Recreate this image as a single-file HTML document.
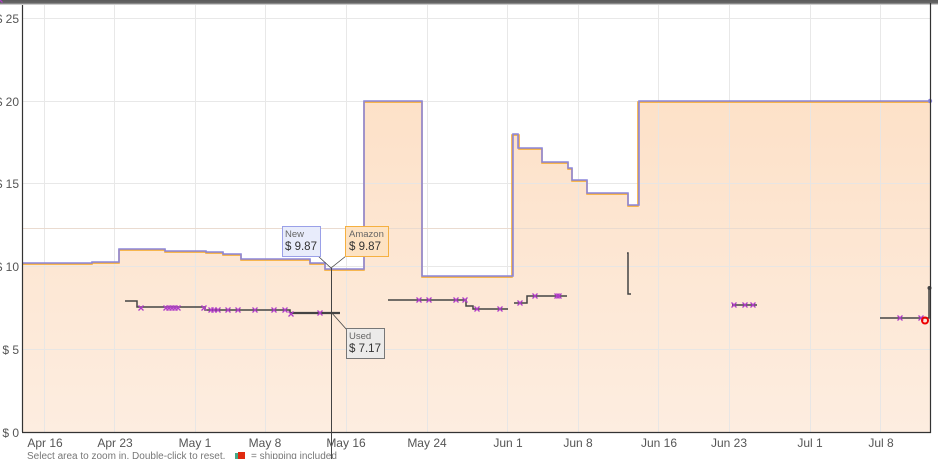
<!DOCTYPE html>
<html><head><meta charset="utf-8"><style>
html,body{margin:0;padding:0;background:#fff;width:938px;height:459px;overflow:hidden;font-family:"Liberation Sans",sans-serif}
svg{display:block}
</style></head><body>
<svg width="938" height="459" viewBox="0 0 938 459" xmlns="http://www.w3.org/2000/svg">
<defs>
<linearGradient id="g" x1="0" y1="0" x2="0" y2="1">
<stop offset="0" stop-color="#fde1c8"/><stop offset="1" stop-color="#fdede0"/>
</linearGradient>
<linearGradient id="tb" x1="0" y1="0" x2="0" y2="1">
<stop offset="0" stop-color="#5a5a5a"/><stop offset="0.6" stop-color="#666"/><stop offset="1" stop-color="#eee"/>
</linearGradient>
</defs>
<rect x="0" y="0" width="938" height="5" fill="url(#tb)"/>
<path d="M22,263 H92 V262 H119 V249 H165 V251 H206 V252 H223 V254 H241 V259 H310 V263 H325 V269 H364 V101 H422 V276 H513 V134 H518 V148 H542 V162 H568 V168 H572 V180 H587 V193 H628 V205 H639 V101 H930 V432 H22 Z" fill="url(#g)"/>
<g stroke="#e6e6e6" stroke-width="1" opacity="0.9">
<line x1="22" y1="18.5" x2="930" y2="18.5"/><line x1="22" y1="101.5" x2="930" y2="101.5"/><line x1="22" y1="183.5" x2="930" y2="183.5"/><line x1="22" y1="266.5" x2="930" y2="266.5"/><line x1="22" y1="349.5" x2="930" y2="349.5"/>
<line x1="44.5" y1="5" x2="44.5" y2="432"/><line x1="114.5" y1="5" x2="114.5" y2="432"/><line x1="195.5" y1="5" x2="195.5" y2="432"/><line x1="265.5" y1="5" x2="265.5" y2="432"/><line x1="346.5" y1="5" x2="346.5" y2="432"/><line x1="427.5" y1="5" x2="427.5" y2="432"/><line x1="507.5" y1="5" x2="507.5" y2="432"/><line x1="578.5" y1="5" x2="578.5" y2="432"/><line x1="658.5" y1="5" x2="658.5" y2="432"/><line x1="729.5" y1="5" x2="729.5" y2="432"/><line x1="810.5" y1="5" x2="810.5" y2="432"/><line x1="880.5" y1="5" x2="880.5" y2="432"/>
</g>
<line x1="22" y1="228.5" x2="930" y2="228.5" stroke="#eadbd0"/>
<path d="M22,264 H92 V263 H119 V250 H165 V252 H206 V253 H223 V255 H241 V260 H310 V264 H325 V270 H364 V102 H422 V277 H512 V135 H519 V149 H542 V163 H568 V169 H572 V181 H587 V194 H628 V206 H638 V102 H930" fill="none" stroke="#f5a623" stroke-width="1.5"/>
<path d="M22,263 H92 V262 H119 V249 H165 V251 H206 V252 H223 V254 H241 V259 H310 V263 H325 V269 H364 V101 H422 V276 H513 V134 H518 V148 H542 V162 H568 V168 H572 V180 H587 V193 H628 V205 H639 V101 H930" fill="none" stroke="#8b86dc" stroke-width="1.6"/>
<circle cx="930" cy="101" r="2.2" fill="#8b86dc"/>
<g fill="none" stroke="#444" stroke-width="1.5">
<path d="M125,301 H137 V307 H205 V310 H290 V312"/>
<path d="M290,313 H340" stroke-width="2.2"/>
<path d="M388,300 H466 V306 H473 V309 H508"/>
<path d="M514,303 H527 V296 H567"/>
<path d="M627,253 H628 V294 H631"/>
<path d="M732,305 H757"/>
<path d="M880,318 H929 V288"/>
</g>
<circle cx="929.5" cy="288" r="2" fill="#444"/>
<g stroke="#b03cc8" stroke-width="1.3" fill="none">
<path id="x" d="M-2.5,-2.5 L2.5,2.5 M-2.5,2.5 L2.5,-2.5"/>
</g>
<g stroke="#b03cc8" stroke-width="1.3">
<use href="#x" x="141" y="308"/><use href="#x" x="166" y="308"/><use href="#x" x="169" y="308"/><use href="#x" x="172" y="308"/><use href="#x" x="175" y="308"/><use href="#x" x="178" y="308"/><use href="#x" x="204" y="308"/><use href="#x" x="211" y="310"/><use href="#x" x="214" y="310"/><use href="#x" x="218" y="310"/><use href="#x" x="228" y="310"/><use href="#x" x="238" y="310"/><use href="#x" x="255" y="310"/><use href="#x" x="274" y="310"/><use href="#x" x="285" y="310"/><use href="#x" x="291" y="314"/><use href="#x" x="320" y="313"/>
<use href="#x" x="419" y="300"/><use href="#x" x="429" y="300"/><use href="#x" x="456" y="300"/><use href="#x" x="465" y="300"/><use href="#x" x="477" y="309"/><use href="#x" x="500" y="309"/><use href="#x" x="520" y="303"/><use href="#x" x="535" y="296"/><use href="#x" x="557" y="296"/><use href="#x" x="559" y="296"/>
<use href="#x" x="734" y="305"/><use href="#x" x="745" y="305"/><use href="#x" x="753" y="305"/>
<use href="#x" x="900" y="318"/><use href="#x" x="921" y="318"/>
</g>
<circle cx="925" cy="320.5" r="3" fill="none" stroke="#e00" stroke-width="2"/>
<line x1="22.5" y1="5" x2="22.5" y2="432" stroke="#333" stroke-width="1.2"/>
<line x1="22" y1="432.5" x2="931" y2="432.5" stroke="#333" stroke-width="1.2"/>
<line x1="930.5" y1="3" x2="930.5" y2="433" stroke="#333" stroke-width="1.2"/>
<line x1="331.5" y1="268" x2="331.5" y2="459" stroke="#444" stroke-width="1"/>
<path d="M318,256 L331,268 L346,256 M331,312 L347,330" stroke="#444" fill="none" stroke-width="0.8"/>
<rect x="282.5" y="226.5" width="38" height="30" fill="#e8ecfb" stroke="#9aa0e8"/>
<text x="285" y="237" font-size="9.5" fill="#666">New</text>
<text x="285" y="250" font-size="11.5" fill="#333">$ 9.87</text>
<rect x="345.5" y="226.5" width="43" height="30" fill="#fde2c2" stroke="#f5b040"/>
<text x="349" y="237" font-size="9.5" fill="#666">Amazon</text>
<text x="349" y="250" font-size="11.5" fill="#333">$ 9.87</text>
<rect x="346.5" y="328.5" width="38" height="30" fill="#ecebea" stroke="#777"/>
<text x="349" y="339" font-size="9.5" fill="#666">Used</text>
<text x="349" y="352" font-size="11.5" fill="#333">$ 7.17</text>
<g font-size="12" fill="#555" text-anchor="end">
<text x="19" y="23">$ 25</text><text x="19" y="106">$ 20</text><text x="19" y="188">$ 15</text><text x="19" y="271">$ 10</text><text x="19" y="354">$ 5</text><text x="19" y="437">$ 0</text>
</g>
<g font-size="12" fill="#555" text-anchor="middle">
<text x="45" y="447">Apr 16</text><text x="115" y="447">Apr 23</text><text x="195" y="447">May 1</text><text x="265" y="447">May 8</text><text x="346" y="447">May 16</text><text x="427" y="447">May 24</text><text x="508" y="447">Jun 1</text><text x="578" y="447">Jun 8</text><text x="659" y="447">Jun 16</text><text x="729" y="447">Jun 23</text><text x="810" y="447">Jul 1</text><text x="881" y="447">Jul 8</text>
</g>
<text x="27" y="459" font-size="10" fill="#777">Select area to zoom in. Double-click to reset.</text>
<rect x="235" y="453" width="5" height="6" fill="#4a8"/><rect x="238" y="452" width="7" height="7" fill="#e02a10"/>
<text x="251" y="459" font-size="10" fill="#777">= shipping included</text>
</svg>
</body></html>
